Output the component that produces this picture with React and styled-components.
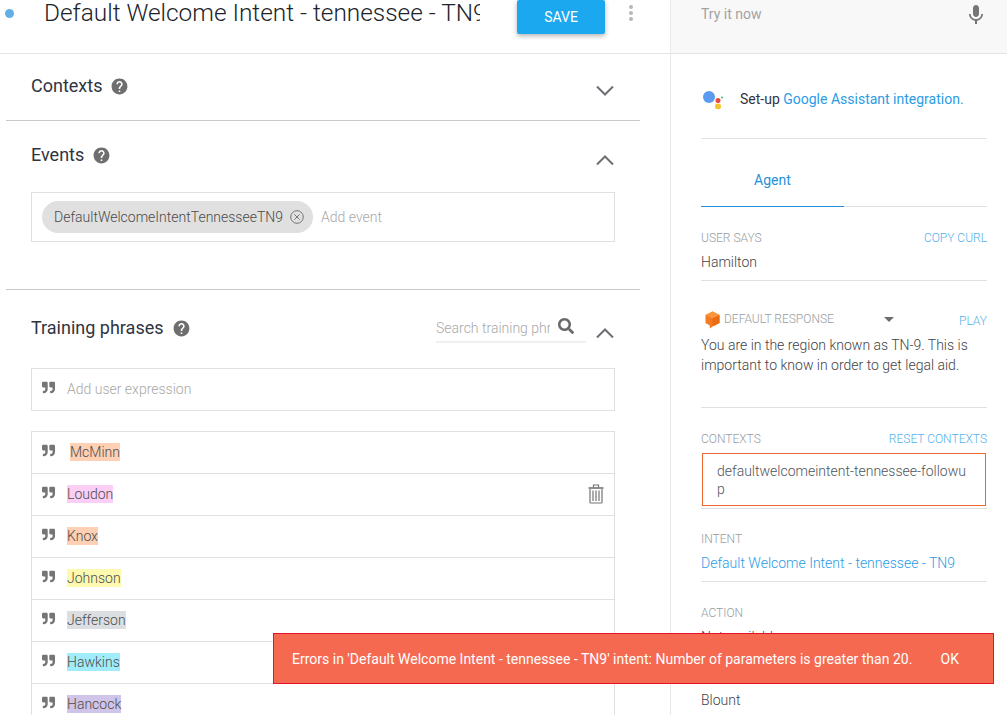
import React from 'react';
import styled, { createGlobalStyle } from 'styled-components';
import { MdHelp, MdMic } from 'react-icons/md';
import { FaQuoteRight, FaSearch } from 'react-icons/fa';

const phrases = [
    { text: 'McMinn', color: '#ffd0b3', indent: 3 },
    { text: 'Loudon', color: '#fbcff5', trash: true },
    { text: 'Knox', color: '#ffd0b3' },
    { text: 'Johnson', color: '#fdfab0' },
    { text: 'Jefferson', color: '#dbdfe2' },
    { text: 'Hawkins', color: '#a0ecfb' },
    { text: 'Hancock', color: '#d0c4e8' },
];

const Chevron = ({ up }) => (
    <ChevronSvg width="18" height="10" viewBox="0 0 18 10">
        <polyline points={up ? '1,9.5 9,1.5 17,9.5' : '1,0.5 9,8.5 17,0.5'} fill="none" stroke="#6b6f73" strokeWidth="2" />
    </ChevronSvg>
);

const Trash = () => (
    <TrashSvg width="16" height="20" viewBox="0 0 16 20">
        <g fill="none" stroke="#757575" strokeWidth="1.2">
            <path d="M0.5 4h15" strokeWidth="1.6" />
            <path d="M5.5 3.5V1h5v2.5" />
            <path d="M2 5v13.2c0 .5.4.8.8.8h10.4c.4 0 .8-.3.8-.8V5" />
            <path d="M5 6.5V17M8 6.5V17M11 6.5V17" />
        </g>
    </TrashSvg>
);

const ChipClose = () => (
    <ChipSvg width="14" height="14" viewBox="0 0 14 14">
        <g fill="none" stroke="#757575" strokeWidth="1">
            <circle cx="7" cy="7" r="6.3" />
            <path d="M4.4 4.4l5.2 5.2M9.6 4.4l-5.2 5.2" />
        </g>
    </ChipSvg>
);

const AssistantLogo = () => (
    <LogoSvg width="22" height="20" viewBox="0 0 22 20">
        <circle cx="7" cy="8" r="6" fill="#5a9bf0" />
        <circle cx="16" cy="11.5" r="2.5" fill="#e8483f" />
        <circle cx="16" cy="17.5" r="3" fill="#f6c22d" />
        <circle cx="20" cy="8.5" r="1" fill="#3fb56b" />
    </LogoSvg>
);

const ResponseLogo = () => (
    <ResponseSvg width="15" height="18" viewBox="0 0 15 18">
        <path d="M7.5 0.5L14.5 4v8l-7 3.6L5 17.5 4.6 14.3 0.5 12V4z" fill="#f47b20" />
        <path d="M7.5 0.5L14.5 4 7.5 7.5 0.5 4z" fill="#f9963f" />
        <path d="M7.5 7.5v8l7-3.6V4z" fill="#e86c14" />
    </ResponseSvg>
);

const App = () => (
    <Page>
        <GlobalStyle />
        <Main>
            <Header>
                <StatusDot />
                <Title>Default Welcome Intent - tennessee - TN9</Title>
                <SaveButton>SAVE</SaveButton>
                <MoreDots><i /><i /><i /></MoreDots>
            </Header>
            <Sections>
                <Section $top={21} $height={67}>
                    <SectionHead>
                        <SectionTitle>Contexts</SectionTitle>
                        <HelpIcon />
                        <Spacer />
                        <Chevron />
                    </SectionHead>
                </Section>
                <Section $top={23} $height={169}>
                    <SectionHead>
                        <SectionTitle>Events</SectionTitle>
                        <HelpIcon />
                        <Spacer />
                        <Chevron up />
                    </SectionHead>
                    <EventBox>
                        <Chip>DefaultWelcomeIntentTennesseeTN9<ChipClose /></Chip>
                        <Placeholder>Add event</Placeholder>
                    </EventBox>
                </Section>
                <Section $top={27} $plain>
                    <SectionHead>
                        <SectionTitle>Training phrases</SectionTitle>
                        <HelpIcon />
                        <Spacer />
                        <SearchBar>
                            <SearchText>Search training phrases</SearchText>
                            <SearchIcon />
                        </SearchBar>
                        <Chevron up />
                    </SectionHead>
                    <AddBox>
                        <QuoteIcon />
                        <Placeholder>Add user expression</Placeholder>
                    </AddBox>
                    <PhraseList>
                        {phrases.map((p) => (
                            <PhraseRow key={p.text}>
                                <QuoteIcon />
                                <Phrase $color={p.color} $indent={p.indent}>{p.text}</Phrase>
                                {p.trash && <Trash />}
                            </PhraseRow>
                        ))}
                    </PhraseList>
                </Section>
            </Sections>
        </Main>
        <Side>
            <TryBar>
                <TryText>Try it now</TryText>
                <MicIcon />
            </TryBar>
            <SideBody>
                <AssistantRow>
                    <AssistantLogo />
                    <span>Set-up <Link>Google Assistant integration.</Link></span>
                </AssistantRow>
                <Tabs>
                    <Tab>Agent</Tab>
                </Tabs>
                <Field $top={24} $bottom={8}>
                    <FieldHead>
                        <Label>USER SAYS</Label>
                        <LabelLink>COPY CURL</LabelLink>
                    </FieldHead>
                    <Value>Hamilton</Value>
                </Field>
                <Field $top={28} $bottom={32}>
                    <ResponseHead>
                        <ResponseLogo />
                        <Label>DEFAULT RESPONSE</Label>
                        <Caret />
                        <PlayLink>PLAY</PlayLink>
                    </ResponseHead>
                    <Response>You are in the region known as TN-9. This is important to know in order to get legal aid.</Response>
                </Field>
                <Field $top={24} $bottom={2}>
                    <FieldHead>
                        <Label>CONTEXTS</Label>
                        <LabelLink>RESET CONTEXTS</LabelLink>
                    </FieldHead>
                    <ContextBox>defaultwelcomeintent-tennessee-followup</ContextBox>
                </Field>
                <Field $top={23} $bottom={8}>
                    <Label>INTENT</Label>
                    <Value><Link>Default Welcome Intent - tennessee - TN9</Link></Value>
                </Field>
                <Field $top={24} $plain>
                    <Label>ACTION</Label>
                    <Value>Not available</Value>
                    <LastValue>Blount</LastValue>
                </Field>
            </SideBody>
        </Side>
        <Toast>
            <span>Errors in 'Default Welcome Intent - tennessee - TN9' intent: Number of parameters is greater than 20.</span>
            <ToastAction>OK</ToastAction>
        </Toast>
    </Page>
);

export default App;

const GlobalStyle = createGlobalStyle`
    html, body {
        margin: 0;
        padding: 0;
        height: 715px;
        overflow: hidden;
        background: #fff;
        font-family: Roboto, "Liberation Sans", sans-serif;
    }
    * {
        box-sizing: border-box;
    }
`;

const Page = styled.div`
    position: relative;
    display: grid;
    grid-template-columns: 670px 337px;
    width: 1007px;
    height: 715px;
    overflow: hidden;
    color: #45494e;
`;

const Main = styled.div`
    min-width: 0;
`;

const Header = styled.div`
    display: flex;
    align-items: flex-start;
    height: 54px;
    padding-left: 5px;
    border-bottom: 1px solid #e4e4e4;
`;

const StatusDot = styled.span`
    width: 9px;
    height: 9px;
    margin-top: 9px;
    border-radius: 50%;
    background: #64aee8;
    flex: none;
`;

const Title = styled.div`
    width: 436px;
    margin: 0 0 0 30px;
    font-size: 24.4px;
    font-weight: 300;
    line-height: 26px;
    color: #20242a;
    white-space: nowrap;
    overflow: hidden;
    flex: none;
`;

const SaveButton = styled.button`
    width: 88px;
    height: 34px;
    margin-left: 37px;
    border: none;
    border-radius: 2px;
    background: #1ca8ef;
    color: #fff;
    font-family: inherit;
    font-size: 14px;
    box-shadow: 0 2px 5px rgba(0, 0, 0, 0.3);
    flex: none;
`;

const MoreDots = styled.div`
    display: flex;
    flex-direction: column;
    gap: 2px;
    margin: 5px 0 0 24px;
    i {
        width: 4px;
        height: 4px;
        border-radius: 50%;
        background: #b4b8bc;
    }
`;

const Sections = styled.div`
    width: 634px;
    margin-left: 6px;
`;

const Section = styled.div`
    height: ${(p) => (p.$height ? `${p.$height}px` : 'auto')};
    padding: ${(p) => p.$top}px 25px 0;
    border-bottom: ${(p) => (p.$plain ? 'none' : '1px solid #cbc8c8')};
`;

const SectionHead = styled.div`
    display: flex;
    align-items: center;
    height: 22px;
`;

const SectionTitle = styled.div`
    font-size: 18px;
    line-height: 22px;
    color: #2f3441;
`;

const HelpIcon = styled(MdHelp)`
    width: 19px;
    height: 19px;
    margin-left: 8px;
    color: #6e6e6e;
`;

const Spacer = styled.div`
    flex: 1;
`;

const ChevronSvg = styled.svg`
    margin: 9px 1px 0 0;
    flex: none;
`;

const EventBox = styled.div`
    display: flex;
    align-items: center;
    height: 50px;
    margin-top: 26px;
    padding-left: 10px;
    border: 1px solid #e0e0e0;
`;

const Chip = styled.div`
    display: flex;
    align-items: center;
    gap: 7px;
    height: 32px;
    padding: 0 9px 0 12px;
    border-radius: 16px;
    background: #e0e0e0;
    font-size: 14px;
    font-weight: 300;
    color: #4a4a4a;
`;

const ChipSvg = styled.svg`
    flex: none;
`;

const Placeholder = styled.span`
    margin-left: 8px;
    font-size: 14px;
    font-weight: 300;
    color: #a8a8a8;
`;

const SearchBar = styled.div`
    display: flex;
    align-items: center;
    align-self: flex-start;
    width: 150px;
    height: 26px;
    margin-right: 10px;
    border-bottom: 2px solid #f0f0f0;
`;

const SearchText = styled.span`
    width: 114px;
    margin-top: -2px;
    font-size: 14px;
    font-weight: 300;
    color: #a8a8a8;
    white-space: nowrap;
    overflow: hidden;
`;

const SearchIcon = styled(FaSearch)`
    width: 16px;
    height: 16px;
    margin: -7px 0 0 8px;
    color: #6a6a6a;
`;

const AddBox = styled.div`
    display: flex;
    align-items: center;
    height: 43px;
    margin-top: 29px;
    padding-left: 9px;
    border: 1px solid #e0e0e0;
    ${Placeholder} {
        margin: -1px 0 0 11px;
    }
`;

const QuoteIcon = styled(FaQuoteRight)`
    width: 15px;
    height: 13px;
    color: #757575;
    flex: none;
    margin-top: -4px;
`;

const PhraseList = styled.div`
    margin-top: 20px;
    border: 1px solid #e0e0e0;
    border-bottom: none;
`;

const PhraseRow = styled.div`
    display: flex;
    align-items: center;
    height: 42px;
    padding: 0 10px 0 9px;
    border-bottom: 1px solid #e0e0e0;
`;

const Phrase = styled.span`
    margin: -1px 0 0 ${(p) => 11 + (p.$indent || 0)}px;
    height: 18px;
    background: ${(p) => p.$color};
    font-size: 14px;
    font-weight: 300;
    line-height: 18px;
    color: #4d4d4d;
`;

const TrashSvg = styled.svg`
    margin: -1px 0 0 auto;
`;

const Side = styled.div`
    border-left: 1px solid #e8e8e8;
    min-width: 0;
`;

const TryBar = styled.div`
    display: flex;
    align-items: flex-start;
    justify-content: space-between;
    height: 54px;
    padding: 6px 19px 0 30px;
    background: #f8f8f8;
    border-bottom: 1px solid #e4e4e4;
`;

const TryText = styled.span`
    font-size: 14px;
    line-height: 16px;
    color: #a2a2a2;
`;

const MicIcon = styled(MdMic)`
    width: 24px;
    height: 24px;
    margin-top: -3px;
    color: #757575;
`;

const SideBody = styled.div`
    padding: 0 20px 0 30px;
`;

const AssistantRow = styled.div`
    display: flex;
    align-items: center;
    height: 85px;
    padding-top: 6px;
    border-bottom: 1px solid #e2e2e2;
    font-size: 14px;
    color: #2f3441;
`;

const LogoSvg = styled.svg`
    margin: 0 16px 0 1px;
    flex: none;
`;

const Link = styled.span`
    color: #2b9ce6;
`;

const Tabs = styled.div`
    height: 68px;
    border-bottom: 1px solid #e0e0e0;
`;

const Tab = styled.div`
    width: 143px;
    height: 68px;
    padding: 33px 0 0 53px;
    border-bottom: 1px solid #1f91dc;
    font-size: 14px;
    line-height: 16px;
    color: #1f91dc;
`;

const Field = styled.div`
    padding: ${(p) => p.$top}px 0 ${(p) => p.$bottom || 0}px;
    border-bottom: ${(p) => (p.$plain ? 'none' : '1px solid #e0e0e0')};
`;

const FieldHead = styled.div`
    display: flex;
    justify-content: space-between;
`;

const Label = styled.div`
    font-size: 12px;
    font-weight: 300;
    line-height: 14px;
    color: #989ca2;
`;

const LabelLink = styled.span`
    font-size: 12px;
    font-weight: 300;
    line-height: 14px;
    color: #55b0ec;
`;

const Value = styled.div`
    margin-top: 7px;
    font-size: 14px;
    font-weight: 300;
    line-height: 20px;
    color: #3f4348;
`;

const ResponseHead = styled.div`
    display: flex;
    align-items: center;
    height: 20px;
`;

const ResponseSvg = styled.svg`
    margin: 1px 4px 0 4px;
    flex: none;
`;

const Caret = styled.span`
    width: 0;
    height: 0;
    margin-left: 50px;
    border-left: 5px solid transparent;
    border-right: 5px solid transparent;
    border-top: 5px solid #6e6e6e;
`;

const PlayLink = styled(LabelLink)`
    margin: 4px 0 0 auto;
`;

const Response = styled.div`
    margin-top: 6px;
    font-size: 14px;
    font-weight: 300;
    line-height: 20px;
    color: #3f4348;
`;

const ContextBox = styled.div`
    height: 53px;
    margin: 7px 1px 0;
    padding: 8px 18px 0 14px;
    border: 1px solid #f0682f;
    font-size: 14px;
    font-weight: 300;
    line-height: 18px;
    color: #50545c;
    word-break: break-all;
`;

const LastValue = styled(Value)`
    margin-top: 43px;
`;

const Toast = styled.div`
    position: absolute;
    left: 273px;
    top: 633px;
    display: flex;
    align-items: center;
    justify-content: space-between;
    width: 721px;
    height: 51px;
    padding: 0 34px 0 18px;
    background: #f66951;
    border: 1px solid #e8132b;
    font-size: 14px;
    color: #fff;
    white-space: nowrap;
`;

const ToastAction = styled.span`
    color: #fff;
`;
